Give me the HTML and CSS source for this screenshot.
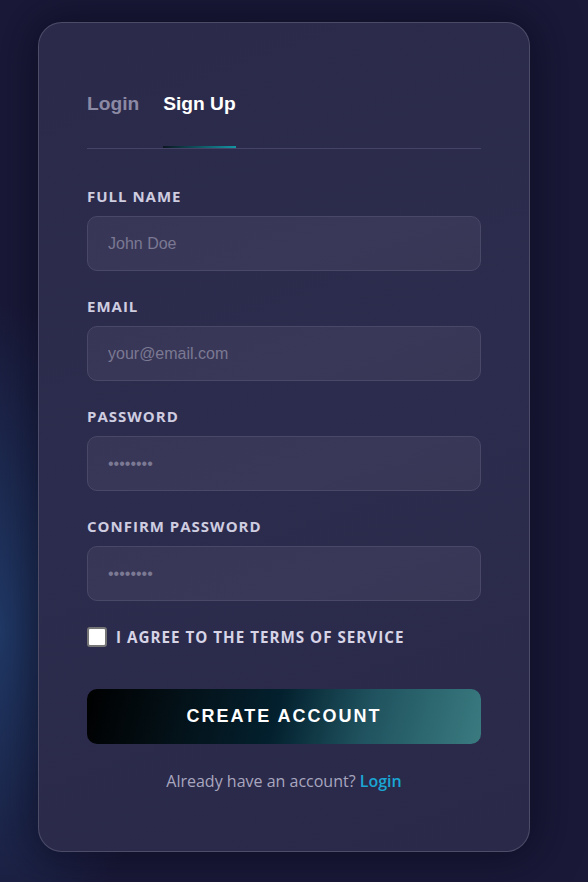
FILE: index.html
```html
<!DOCTYPE html>
<html lang="en">
<head>
<meta charset="utf-8">
<title>Sign Up</title>
<link rel="stylesheet" href="styles.css">
</head>
<body>
<div class="page">
  <div class="card">
    <div class="tabs">
      <button class="tab">Login</button>
      <button class="tab active">Sign Up</button>
    </div>
    <form class="form">
      <div class="field">
        <label class="label" for="name">Full Name</label>
        <input class="input" id="name" type="text" placeholder="John Doe">
      </div>
      <div class="field">
        <label class="label" for="email">Email</label>
        <input class="input" id="email" type="email" placeholder="your@email.com">
      </div>
      <div class="field">
        <label class="label" for="pw">Password</label>
        <input class="input pw" id="pw" type="password" placeholder="••••••••">
      </div>
      <div class="field">
        <label class="label" for="pw2">Confirm Password</label>
        <input class="input pw" id="pw2" type="password" placeholder="••••••••">
      </div>
      <label class="agree"><span class="box"></span><span>I agree to the terms of service</span></label>
      <button type="button" class="submit">Create Account</button>
      <p class="footer">Already have an account? <a class="link" href="#">Login</a></p>
    </form>
  </div>
</div>
</body>
</html>
```
FILE: styles.css
```css
html, body {
  margin: 0;
  padding: 0;
  height: 100%;
}
body {
  background:
    radial-gradient(ellipse 170px 330px at 0px 630px, rgba(35, 70, 120, 0.75), rgba(35, 70, 120, 0) 100%),
    #1a1938;
  font-family: "Open Sans", "Noto Sans", sans-serif;
  overflow: hidden;
}
.page {
  padding: 22px 0 0 38px;
}
.card {
  box-sizing: border-box;
  width: 492px;
  height: 830px;
  padding: 48px 48px 58px;
  border: 1px solid rgba(255, 255, 255, 0.16);
  border-radius: 24px;
  background: linear-gradient(160deg, #2b2a4a 0%, #2c2c4e 50%, #2a2949 100%);
  box-shadow: 0 0 40px 10px rgba(10, 10, 30, 0.55);
}
.tabs {
  display: flex;
  gap: 24px;
  border-bottom: 1px solid #454468;
}
.tab {
  position: relative;
  background: none;
  border: 0;
  padding: 22px 0 33px;
  margin: 0;
  font-family: "Liberation Sans", Arial, sans-serif;
  font-weight: 700;
  font-size: 19.2px;
  line-height: 22px;
  color: #8b89a3;
  cursor: pointer;
}
.tab.active {
  color: #ffffff;
}
.tab.active::after {
  content: "";
  position: absolute;
  left: 0;
  right: 0;
  bottom: 0;
  height: 2px;
  background: linear-gradient(90deg, #0b1620, #1495a4);
}
.form {
  display: flex;
  flex-direction: column;
  padding-top: 37px;
}
.field {
  display: flex;
  flex-direction: column;
  gap: 10px;
  margin-bottom: 25px;
}
.label {
  font-weight: 700;
  font-size: 15px;
  line-height: 20px;
  letter-spacing: 1px;
  text-transform: uppercase;
  color: #cfcde0;
}
.input {
  box-sizing: border-box;
  height: 55px;
  padding: 0 20px;
  border: 1px solid #4a4868;
  border-radius: 10px;
  background: linear-gradient(160deg, #383656 0%, #3a3858 60%, #383655 100%);
  font-family: "Liberation Sans", Arial, sans-serif;
  font-size: 16px;
  color: #ffffff;
  outline: none;
}
.input::placeholder {
  color: #7b7993;
}
.agree {
  display: flex;
  align-items: center;
  gap: 9px;
  margin-top: 1px;
  font-weight: 700;
  font-size: 15.2px;
  line-height: 20px;
  letter-spacing: 1px;
  text-transform: uppercase;
  color: #d6d4e6;
}
.box {
  box-sizing: border-box;
  width: 20px;
  height: 20px;
  border: 2px solid #767676;
  border-radius: 3px;
  background: #ffffff;
  flex: none;
}
.submit {
  margin-top: 42px;
  height: 55px;
  border: 0;
  border-radius: 10px;
  background: linear-gradient(105deg, #000000 0%, #04141c 28%, #03202e 48%, #1f525e 70%, #3a7b80 100%);
  color: #ffffff;
  font-family: "Liberation Sans", Arial, sans-serif;
  font-weight: 700;
  font-size: 18px;
  letter-spacing: 2px;
  text-transform: uppercase;
  cursor: pointer;
}
.footer {
  margin: 25px 0 0;
  text-align: center;
  font-size: 16px;
  line-height: 24px;
  color: #a9a6bf;
}
.link {
  color: #1aa6d4;
  font-weight: 600;
  text-decoration: none;
}
```
